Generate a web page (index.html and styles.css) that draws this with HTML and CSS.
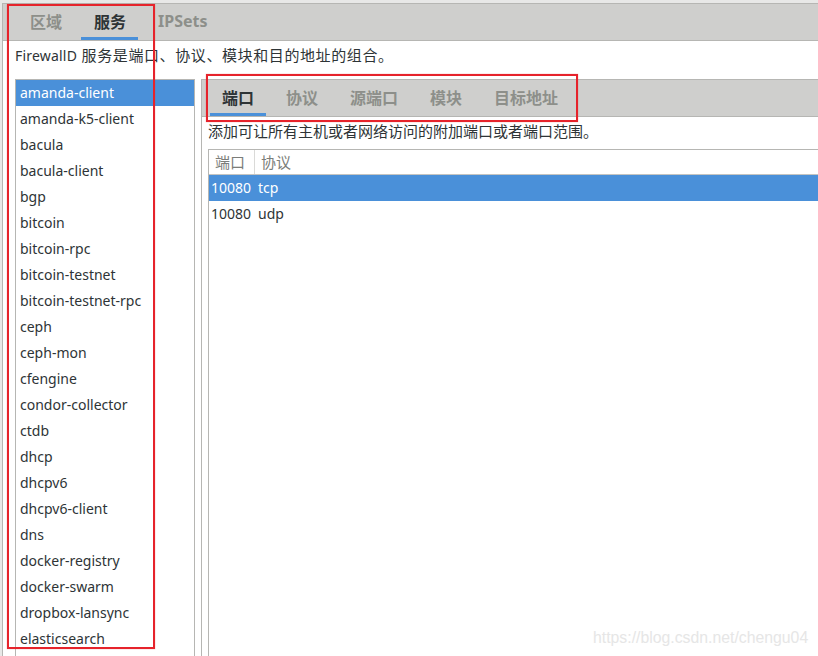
FILE: index.html
```html
<!DOCTYPE html>
<html lang="zh-CN">
<head>
<meta charset="utf-8">
<title>FirewallD 服务</title>
<link rel="stylesheet" href="styles.css">
</head>
<body>
<div class="screen">
  <div class="notebook">
    <div class="tabs top-tabs">
      <div class="tab">区域</div>
      <div class="tab active">服务</div>
      <div class="tab">IPSets</div>
    </div>
    <div class="page">
      <p class="desc"><span class="lat">FirewallD</span> 服务是端口、协议、模块和目的地址的组合。</p>
      <div class="split">
        <ul class="services">
          <li class="sel">amanda-client</li>
          <li>amanda-k5-client</li>
          <li>bacula</li>
          <li>bacula-client</li>
          <li>bgp</li>
          <li>bitcoin</li>
          <li>bitcoin-rpc</li>
          <li>bitcoin-testnet</li>
          <li>bitcoin-testnet-rpc</li>
          <li>ceph</li>
          <li>ceph-mon</li>
          <li>cfengine</li>
          <li>condor-collector</li>
          <li>ctdb</li>
          <li>dhcp</li>
          <li>dhcpv6</li>
          <li>dhcpv6-client</li>
          <li>dns</li>
          <li>docker-registry</li>
          <li>docker-swarm</li>
          <li>dropbox-lansync</li>
          <li>elasticsearch</li>
        </ul>
        <div class="detail">
          <div class="tabs sub-tabs">
            <div class="tab active">端口</div>
            <div class="tab">协议</div>
            <div class="tab">源端口</div>
            <div class="tab">模块</div>
            <div class="tab">目标地址</div>
          </div>
          <div class="detail-page">
            <p class="hint">添加可让所有主机或者网络访问的附加端口或者端口范围。</p>
            <div class="table">
              <div class="thead">
                <div class="hc c1">端口</div>
                <div class="hc c2">协议</div>
              </div>
              <div class="row sel"><div class="cell c1">10080</div><div class="cell c2">tcp</div></div>
              <div class="row"><div class="cell c1">10080</div><div class="cell c2">udp</div></div>
            </div>
          </div>
        </div>
      </div>
    </div>
  </div>
  <div class="mark mark-left"></div>
  <div class="mark mark-right"></div>
  <div class="watermark">https://blog.csdn.net/chengu04</div>
</div>
</body>
</html>
```
FILE: styles.css
```css
html, body {
  margin: 0;
  padding: 0;
  height: 656px;
  overflow: hidden;
  background: #e8e8e7;
}

.screen {
  position: relative;
  width: 818px;
  height: 656px;
  overflow: hidden;
  box-sizing: border-box;
  padding: 3px 0 0 2px;
  background: #e8e8e7;
  font-family: "Noto Sans", "Noto Sans CJK SC", sans-serif;
  color: #2e3436;
  font-size: 14px;
}

.notebook {
  height: 100%;
  display: flex;
  flex-direction: column;
  background: #ffffff;
  border-left: 1px solid #b6b6b3;
  border-top: 1px solid #b6b6b3;
}

.tabs {
  display: flex;
  gap: 8px;
  height: 36px;
  flex: none;
  background: #cfcfcd;
  border-bottom: 1px solid #b6b6b3;
}

.top-tabs {
  padding-left: 14px;
}

.sub-tabs {
  padding-left: 8px;
}

.tab {
  display: flex;
  align-items: center;
  padding: 0 12px 2px;
  font-size: 16px;
  font-weight: bold;
  color: #8d8f8a;
}

.top-tabs .tab {
  padding: 0 12px 2px 13px;
}

.top-tabs .tab + .tab {
  margin-left: -1px;
}

.tab.active {
  color: #2e3436;
  box-shadow: inset 0 -3px 0 #4a90d9;
}

.page {
  flex: 1;
  min-height: 0;
  display: flex;
  flex-direction: column;
  padding-left: 12px;
}

.desc {
  margin: 4px 0 13px;
  line-height: 20px;
  font-size: 15px;
  letter-spacing: 0.6px;
  white-space: nowrap;
}

.lat {
  font-size: 14px;
  letter-spacing: 0.2px;
}

.split {
  flex: 1;
  min-height: 0;
  display: flex;
}

.services {
  list-style: none;
  margin: 0;
  padding: 0;
  width: 178px;
  flex: none;
  border: 1px solid #b6b6b3;
  border-bottom: none;
  overflow: hidden;
  background: #ffffff;
}

.services li {
  height: 26px;
  line-height: 25px;
  padding-left: 4px;
  white-space: nowrap;
}

.services li.sel {
  background: #4a90d9;
  color: #ffffff;
}

.detail {
  flex: 1;
  min-width: 0;
  margin-left: 6px;
  display: flex;
  flex-direction: column;
  border-left: 1px solid #b6b6b3;
  border-top: 1px solid #b6b6b3;
}

.detail-page {
  flex: 1;
  min-height: 0;
  display: flex;
  flex-direction: column;
  padding-left: 6px;
}

.hint {
  margin: 4px 0 8px;
  line-height: 20px;
  font-size: 15px;
  white-space: nowrap;
}

.table {
  flex: 1;
  min-height: 0;
  border: 1px solid #b6b6b3;
  border-right: none;
  background: #ffffff;
}

.thead {
  display: flex;
  height: 24px;
  border-bottom: 1px solid #c4c4c1;
}

.hc {
  display: flex;
  align-items: center;
  font-size: 15px;
  color: #7b7d79;
  padding: 0 0 2px 6px;
  box-sizing: border-box;
}

.hc.c1 {
  width: 46px;
  border-right: 1px solid #dadad8;
}

.row {
  display: flex;
  height: 26px;
  line-height: 25px;
}

.row.sel {
  background: #4a90d9;
  color: #ffffff;
}

.cell.c1 {
  width: 46px;
  padding-left: 2px;
  box-sizing: border-box;
}

.cell.c2 {
  padding-left: 3px;
}

.mark {
  position: absolute;
  box-sizing: border-box;
  border: 2px solid #e6232b;
  box-shadow: 0 0 1px rgba(230, 35, 43, 0.5);
}

.mark-left {
  left: 7px;
  top: 4px;
  width: 148px;
  height: 645px;
}

.mark-right {
  left: 206px;
  top: 74px;
  width: 372px;
  height: 48px;
}

.watermark {
  position: absolute;
  left: 593px;
  top: 629px;
  font-family: "Liberation Sans", Arial, sans-serif;
  font-size: 15.8px;
  line-height: 18px;
  color: #e6e6e6;
  white-space: nowrap;
}
```
